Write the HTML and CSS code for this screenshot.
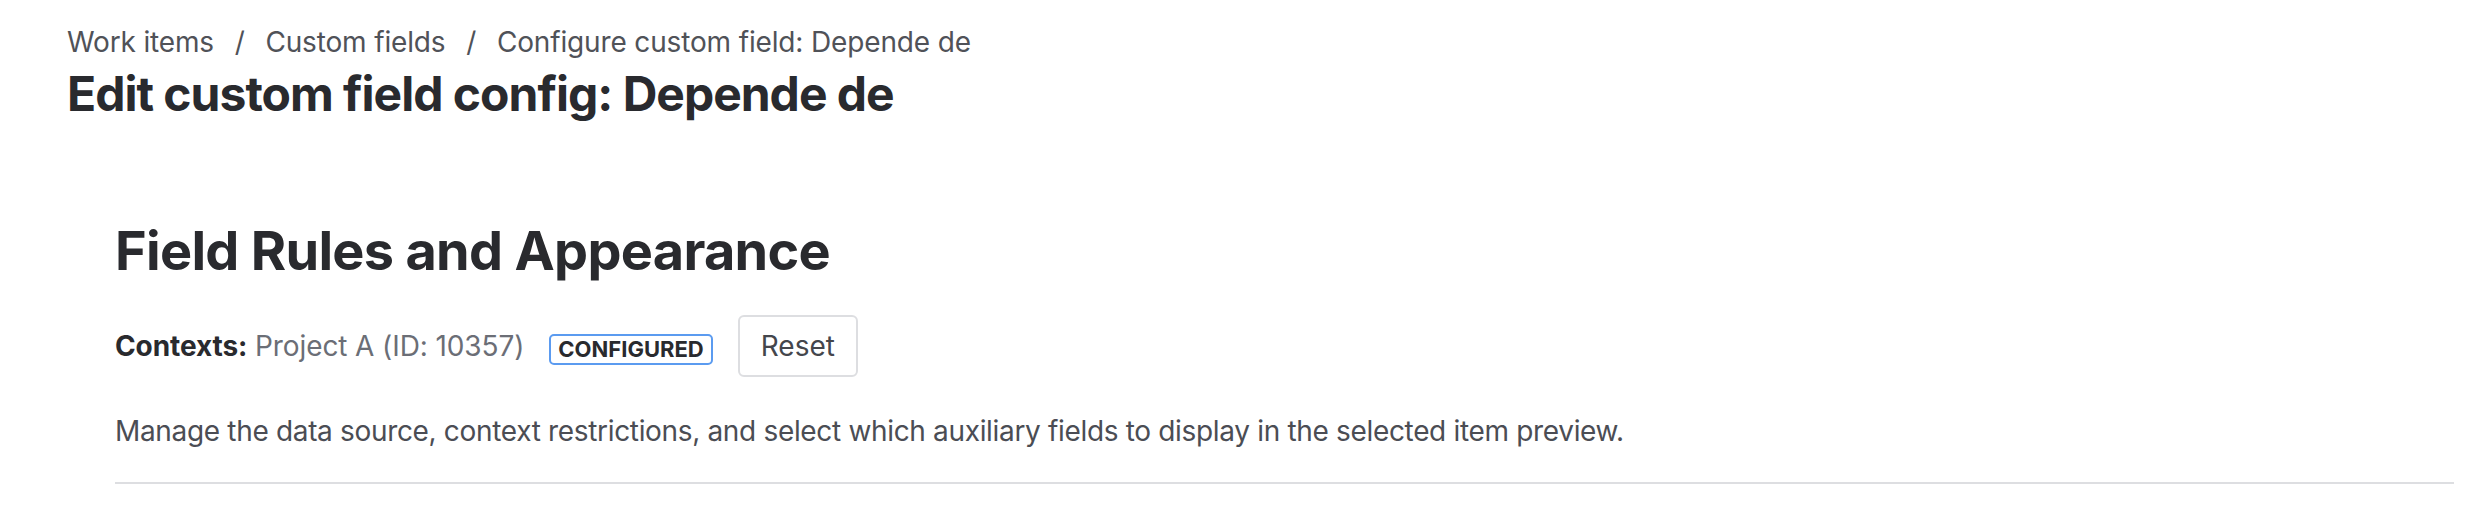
FILE: index.html
```html
<!DOCTYPE html>
<html lang="en">
<head>
  <meta charset="UTF-8" />
  <title>Edit custom field config: Depende de</title>
  <link rel="stylesheet" href="styles.css">
</head>
<body>
  <div class="page-header">
    <nav class="breadcrumbs">
      <a href="#">Work items</a>
      <span class="sep">/</span>
      <a href="#">Custom fields</a>
      <span class="sep">/</span>
      <a href="#">Configure custom field: Depende de</a>
    </nav>
    <h1>Edit custom field config: Depende de</h1>
  </div>

  <div class="section">
    <h2>Field Rules and Appearance</h2>

    <div class="context-row">
      <span class="contexts"><strong>Contexts:</strong> <span class="muted">Project A (ID: 10357)</span></span>
      <span class="badge">CONFIGURED</span>
      <button class="btn">Reset</button>
    </div>

    <p class="description">Manage the data source, context restrictions, and select which auxiliary fields to display in the selected item preview.</p>

    <hr class="divider" />
  </div>
</body>
</html>
```

FILE: styles.css
```css
:root {
  --text: #292a2e;
  --subtle: #505258;
  --muted: #6b6e76;
  --border: #dddee1;
  --blue: #5b9bf0;
}

* {
  box-sizing: border-box;
}

body {
  margin: 0;
  padding: 22px 38px 0 67px;
  background: #fff;
  color: var(--text);
  font-family: Inter, "Noto Sans", sans-serif;
}

.breadcrumbs {
  font-size: 28px;
  line-height: 40px;
  letter-spacing: -0.15px;
  color: var(--subtle);
}

.breadcrumbs a {
  color: var(--subtle);
  text-decoration: none;
}

.breadcrumbs .sep {
  margin: 0 13px;
}

h1 {
  margin: 4px 0 0;
  font-size: 48px;
  line-height: 56px;
  font-weight: 700;
  letter-spacing: -1px;
}

.section {
  padding-left: 48px;
  margin-top: 97px;
}

h2 {
  margin: 0;
  font-size: 54px;
  line-height: 64px;
  font-weight: 700;
  letter-spacing: -0.7px;
}

.context-row {
  display: flex;
  align-items: center;
  gap: 25px;
  margin-top: 32px;
}

.contexts {
  font-size: 28px;
  letter-spacing: -0.1px;
}

.contexts strong {
  font-weight: 700;
}

.muted {
  color: var(--muted);
}

.badge {
  display: inline-block;
  padding: 0 7px;
  height: 31px;
  line-height: 27px;
  border: 2px solid var(--blue);
  border-radius: 5px;
  font-size: 22px;
  font-weight: 700;
  color: var(--text);
  margin-top: 6px;
}

.btn {
  height: 62px;
  padding: 0 21px;
  background: #fff;
  border: 2px solid var(--border);
  border-radius: 6px;
  font-family: inherit;
  font-size: 28px;
  color: #44464c;
  cursor: pointer;
}

.description {
  margin: 34px 0 0;
  font-size: 28px;
  line-height: 40px;
  letter-spacing: -0.33px;
  color: #4b4d54;
}

.divider {
  margin: 31px 0 0;
  border: 0;
  height: 2px;
  background: var(--border);
}
```
